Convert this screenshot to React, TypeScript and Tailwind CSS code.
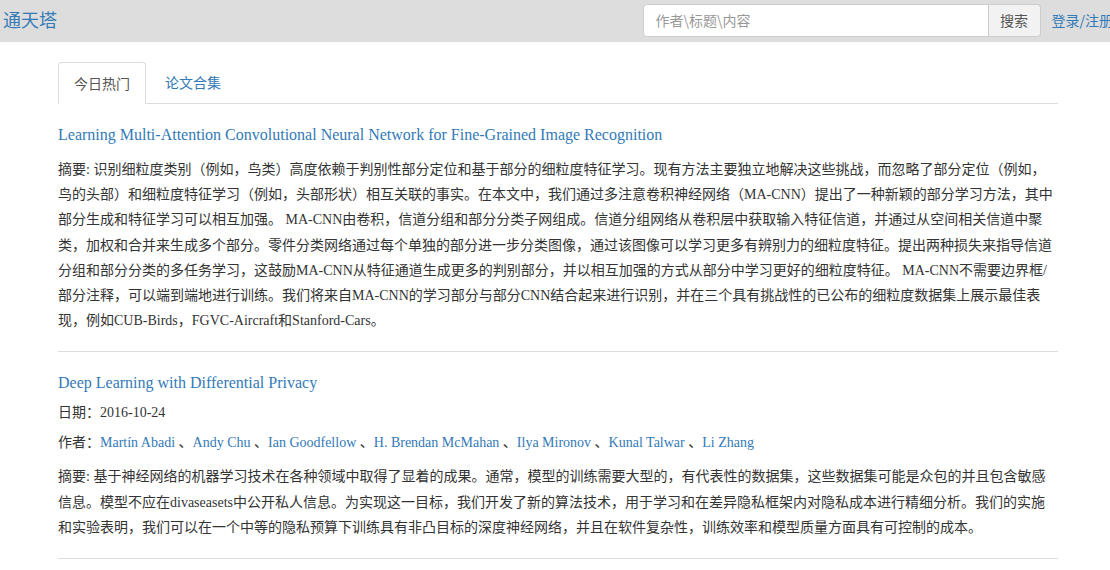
import React from "react";

const serif = "font-['Liberation_Serif','Noto_Sans_CJK_SC',serif]";

const authors = [
  "Martín Abadi",
  "Andy Chu",
  "Ian Goodfellow",
  "H. Brendan McMahan",
  "Ilya Mironov",
  "Kunal Talwar",
  "Li Zhang",
];

const App = () => {
  return (
    <div className={`min-h-[570px] bg-white text-[#333] text-[14px] ${serif}`}>
      <nav className="h-[42px] bg-[#dddddd] flex items-center overflow-hidden">
        <a className="pl-[3px] text-[18px] text-[#337ab7] font-['Noto_Sans_CJK_SC',sans-serif] shrink-0 -mt-[4px]">
          通天塔
        </a>
        <div className="flex-1" />
        <div className="flex items-center shrink-0 mr-[-3px] -mt-[2px] font-['Noto_Sans_CJK_SC',sans-serif]">
          <div className="flex h-[33px]">
            <input
              type="text"
              placeholder="作者\标题\内容"
              className="w-[346px] h-full bg-white border border-[#cccccc] rounded-l-[4px] px-[12px] text-[14px] outline-none placeholder:text-[#999]"
            />
            <button className="w-[52px] h-full bg-[#f2f2f2] border border-l-0 border-[#cccccc] rounded-r-[4px] text-[14px] text-[#555]">
              搜索
            </button>
          </div>
          <a className="ml-[11px] text-[14px] text-[#337ab7] whitespace-nowrap">登录/注册</a>
        </div>
      </nav>

      <div className="ml-[58px] w-[1000px] pt-[20px]">
        <ul className="flex border-b border-[#dddddd] h-[42px] font-['Noto_Sans_CJK_SC',sans-serif]">
          <li className="h-[42px] w-[88px] flex items-center justify-center border border-[#dddddd] border-b-white rounded-t-[4px] bg-white text-[#555] -mb-px">
            今日热门
          </li>
          <li className="h-[41px] px-[17px] ml-[2px] flex items-center text-[#337ab7]">论文合集</li>
        </ul>

        <div className="pt-[20px]">
          <a className="block text-[16px] text-[#337ab7] leading-[22px]">
            Learning Multi-Attention Convolutional Neural Network for Fine-Grained Image Recognition
          </a>
          <p className="mt-[11px] leading-[25.2px]">
            摘要: 识别细粒度类别（例如，鸟类）高度依赖于判别性部分定位和基于部分的细粒度特征学习。现有方法主要独立地解决这些挑战，而忽略了部分定位（例如，鸟的头部）和细粒度特征学习（例如，头部形状）相互关联的事实。在本文中，我们通过多注意卷积神经网络（MA-CNN）提出了一种新颖的部分学习方法，其中部分生成和特征学习可以相互加强。 MA-CNN由卷积，信道分组和部分分类子网组成。信道分组网络从卷积层中获取输入特征信道，并通过从空间相关信道中聚类，加权和合并来生成多个部分。零件分类网络通过每个单独的部分进一步分类图像，通过该图像可以学习更多有辨别力的细粒度特征。提出两种损失来指导信道分组和部分分类的多任务学习，这鼓励MA-CNN从特征通道生成更多的判别部分，并以相互加强的方式从部分中学习更好的细粒度特征。 MA-CNN不需要边界框/部分注释，可以端到端地进行训练。我们将来自MA-CNN的学习部分与部分CNN结合起来进行识别，并在三个具有挑战性的已公布的细粒度数据集上展示最佳表现，例如CUB-Birds，FGVC-Aircraft和Stanford-Cars。
          </p>
        </div>

        <hr className="mt-[18px] border-t border-[#dddddd]" />

        <div className="pt-[20px]">
          <a className="block text-[16px] text-[#337ab7] leading-[22px]">
            Deep Learning with Differential Privacy
          </a>
          <div className="mt-[8px] leading-[22px]">日期：2016-10-24</div>
          <div className="mt-[8px] leading-[22px]">
            作者：
            {authors.map((a, i) => (
              <span key={a}>
                {i > 0 && " 、"}
                <a className="text-[#337ab7]">{a}</a>
              </span>
            ))}
          </div>
          <p className="mt-[10px] leading-[25.2px]">
            摘要: 基于神经网络的机器学习技术在各种领域中取得了显着的成果。通常，模型的训练需要大型的，有代表性的数据集，这些数据集可能是众包的并且包含敏感信息。模型不应在divaseasets中公开私人信息。为实现这一目标，我们开发了新的算法技术，用于学习和在差异隐私框架内对隐私成本进行精细分析。我们的实施和实验表明，我们可以在一个中等的隐私预算下训练具有非凸目标的深度神经网络，并且在软件复杂性，训练效率和模型质量方面具有可控制的成本。
          </p>
        </div>

        <hr className="mt-[18px] border-t border-[#dddddd]" />
      </div>
    </div>
  );
};

export default App;
